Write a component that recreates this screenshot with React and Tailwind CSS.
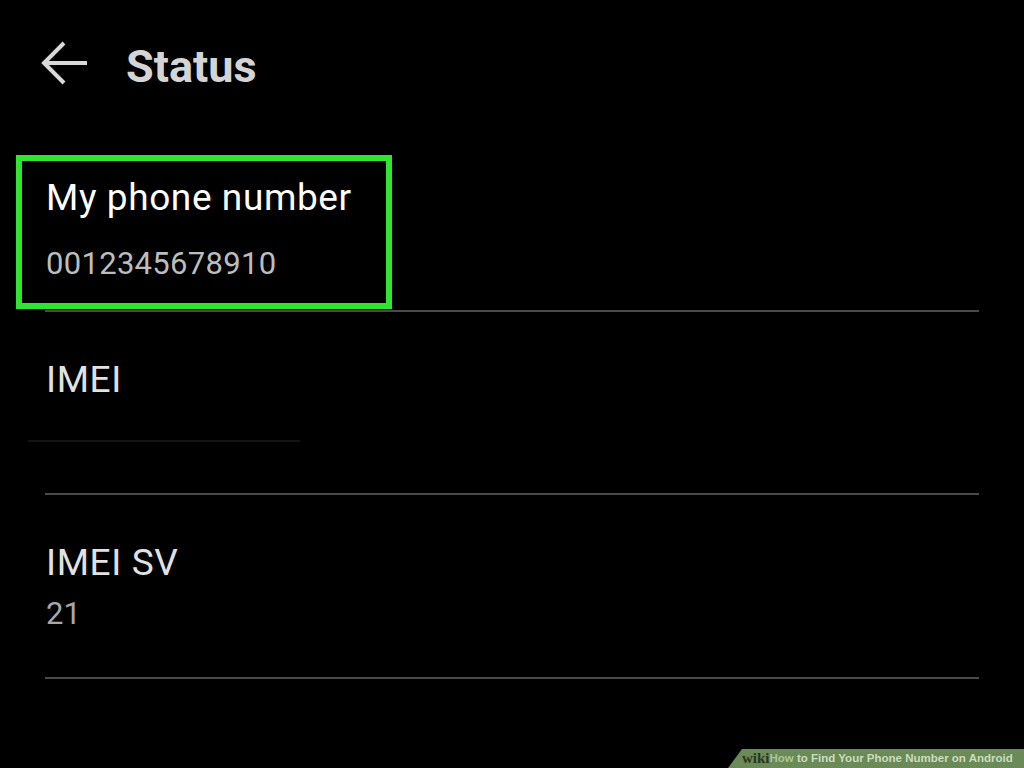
import React from "react";

// back arrow drawn as strokes
function BackArrow() {
  return (
    <svg width="48" height="48" viewBox="0 0 48 48" fill="none">
      <path d="M3 24 H47" stroke="#d9d9d9" strokeWidth="4" />
      <path d="M24 4 L4 24 L24 44" stroke="#d9d9d9" strokeWidth="4" strokeLinejoin="miter" />
    </svg>
  );
}

function Divider() {
  return <div className="ml-[45px] w-[934px] h-[2px] bg-[#4a4a4a]" />;
}

export default function App() {
  return (
    <div
      className="relative w-[1024px] h-[768px] bg-black overflow-hidden"
      style={{ fontFamily: "Roboto, 'Liberation Sans', sans-serif" }}
    >
      {/* header */}
      <div className="flex pl-[40px] pt-[39px]">
        <BackArrow />
        <h1 className="ml-[38px] mt-[5px] text-[45px] leading-[46px] font-bold text-[#d4d4d4]">
          Status
        </h1>
      </div>

      {/* my phone number */}
      <div className="mt-[90px] pl-[46px]">
        <p className="text-[37px] leading-[36px] tracking-[0.6px] text-white">My phone number</p>
        <p className="mt-[32px] text-[31px] leading-[31px] tracking-[0.3px] text-[#bdbdbd]">0012345678910</p>
      </div>
      <div className="mt-[31px]">
        <Divider />
      </div>

      {/* IMEI */}
      <div className="mt-[50px] pl-[46px]">
        <p className="text-[37px] leading-[36px] tracking-[0.6px] text-[#e2e2e2]">IMEI</p>
      </div>
      <div className="mt-[42px] ml-[28px] w-[272px] h-[2px] bg-[#141414]" />
      <div className="mt-[51px]">
        <Divider />
      </div>

      {/* IMEI SV */}
      <div className="mt-[50px] pl-[46px]">
        <p className="text-[37px] leading-[36px] tracking-[0.6px] text-[#e2e2e2]">IMEI SV</p>
        <p className="mt-[17px] text-[31px] leading-[31px] text-[#a8a8a8]">21</p>
      </div>
      <div className="mt-[48px]">
        <Divider />
      </div>

      {/* highlight box */}
      <div className="absolute left-[16px] top-[155px] w-[376px] h-[154px] border-[6px] border-[#2fe52f]" />

      {/* wikiHow banner */}
      <div className="absolute right-0 bottom-0 w-[296px] h-[19px] bg-[#6a8a58] [clip-path:polygon(14px_0,100%_0,100%_100%,0_100%)] flex items-center pl-[14px]">
        <span
          className="text-[15px] font-bold text-[#2a3820] leading-none"
          style={{ fontFamily: "'Liberation Serif', serif" }}
        >
          wiki
        </span>
        <span
          className="text-[11.5px] font-bold leading-none text-[#a9c796] whitespace-nowrap"
          style={{ fontFamily: "'Liberation Sans', Arial, sans-serif" }}
        >
          How<span className="text-[#cbdcbf]"> to Find Your Phone Number on Android</span>
        </span>
      </div>
    </div>
  );
}
